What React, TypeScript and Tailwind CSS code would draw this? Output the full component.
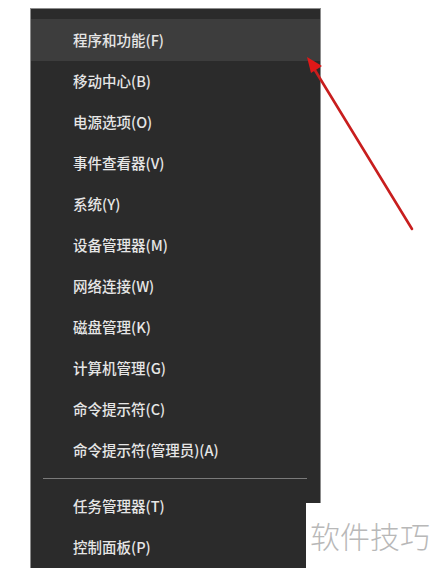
const items = [
  '程序和功能(F)',
  '移动中心(B)',
  '电源选项(O)',
  '事件查看器(V)',
  '系统(Y)',
  '设备管理器(M)',
  '网络连接(W)',
  '磁盘管理(K)',
  '计算机管理(G)',
  '命令提示符(C)',
  '命令提示符(管理员)(A)',
];

const bottomItems = ['任务管理器(T)', '控制面板(P)'];

const font = { fontFamily: '"Noto Sans CJK SC", "Noto Sans", sans-serif' };

function MenuItem({ label, active }: { label: string; active?: boolean }) {
  return (
    <div
      className={`flex items-center pl-[42px] pb-[1px] text-[14.5px] font-medium text-[#e6e6e6] ${
        active ? 'h-[42px] bg-[#3d3d3d]' : 'h-[41px]'
      }`}
    >
      {label}
    </div>
  );
}

export default function App() {
  return (
    <div className="relative w-[438px] h-[568px] overflow-hidden bg-white" style={font}>
      <div className="ml-[30px] mt-[8px] w-[291px] h-[600px] border border-b-0 border-[#8c8c8c] bg-[#2b2b2b] pt-[10px]">
        {items.map((label, i) => (
          <MenuItem key={label} label={label} active={i === 0} />
        ))}
        <div className="ml-[12px] mr-[13px] my-[7px] h-px bg-[#7a7a7a]" />
        {bottomItems.map((label) => (
          <MenuItem key={label} label={label} />
        ))}
      </div>

      {/* watermark */}
      <div className="absolute left-[306px] top-[503px] right-0 bottom-0 bg-white flex items-center pl-[4px] pb-[2px]">
        <span className="text-[30px] leading-none font-light text-[#b8b8b8]">软件技巧</span>
      </div>

      {/* red arrow */}
      <svg className="absolute inset-0" width="438" height="568" viewBox="0 0 438 568">
        <line x1="412" y1="229" x2="313" y2="67" stroke="#c81e1e" strokeWidth="2.6" strokeLinecap="round" />
        <polygon points="307,57 322,66 311,73" fill="#e01818" />
      </svg>
    </div>
  );
}
